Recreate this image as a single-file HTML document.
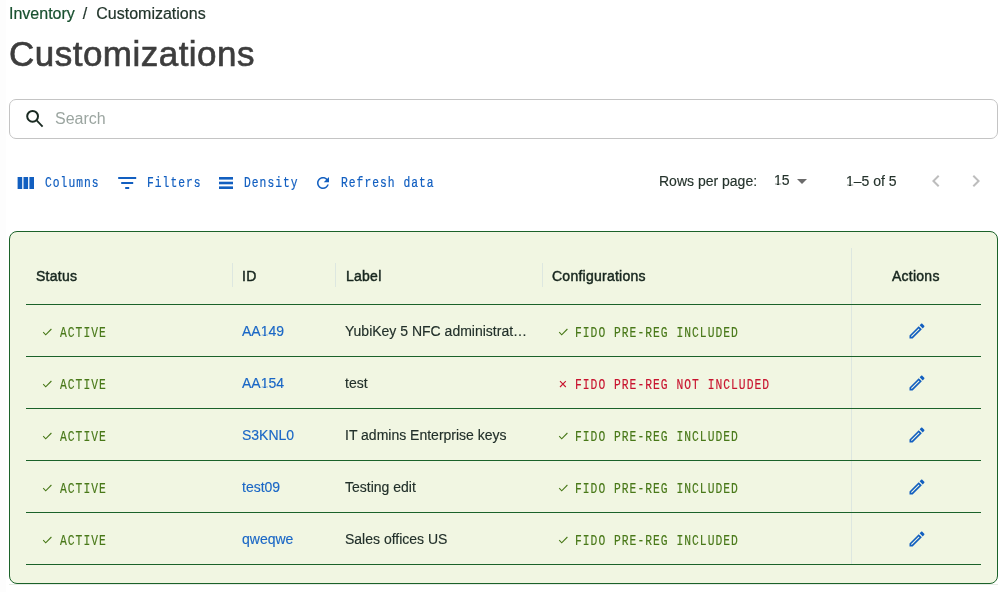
<!DOCTYPE html>
<html>
<head>
<meta charset="utf-8">
<style>
html,body{margin:0;padding:0;}
body{will-change:transform;width:1006px;height:592px;overflow:hidden;background:#fff;position:relative;font-family:"Liberation Sans",sans-serif;}
.abs{position:absolute;white-space:nowrap;}
.strip{left:0;top:0;width:6px;height:592px;background:#fdfdfd;}
.crumb{left:9px;top:2px;font-size:16px;line-height:24px;color:#22352b;-webkit-text-stroke:0.2px #22352b;}
.crumb .inv{color:#18502f;-webkit-text-stroke:0.2px #18502f;}
.crumb .sep{margin:0 9px 0 8px;}
.title{left:9px;top:33px;font-size:35px;line-height:42px;color:#3d3d3d;letter-spacing:0.48px;-webkit-text-stroke:0.65px #3d3d3d;}
.search{left:9px;top:99px;width:987px;height:38px;border:1px solid #c4c4c4;border-radius:7px;}
.ph{left:55px;top:107px;font-size:16px;line-height:24px;color:#9ba5a0;}
.tb{font-family:"Liberation Mono",monospace;font-size:13px;line-height:20px;color:#125fc0;top:174px;transform:scale(0.87,1.12);transform-origin:0 13.5px;letter-spacing:1.166px;-webkit-text-stroke:0.2px #125fc0;}
.pg{font-size:14px;line-height:20px;color:#25332c;top:171px;-webkit-text-stroke:0.15px #25332c;}
.grid{left:9px;top:231px;width:987px;height:351px;border:1px solid #1b6229;border-radius:8px;background:#f1f6e2;}
.hd{font-size:14px;line-height:20px;font-weight:normal;color:#17261e;top:266px;letter-spacing:0.25px;-webkit-text-stroke:0.45px #17261e;}
.vsep{width:1px;background:#dde7e0;}
.hline{left:26px;width:955px;height:1px;background:#1b6229;}
.cell{font-size:14px;line-height:20px;color:#22302a;-webkit-text-stroke:0.15px #22302a;}
.cell.link{color:#1a67c6;-webkit-text-stroke:0.15px #1a67c6;}
.mono{font-family:"Liberation Mono",monospace;font-size:13px;line-height:20px;transform:scale(0.87,1.15);transform-origin:0 13.5px;letter-spacing:1.166px;}
.ok{-webkit-text-stroke:0.15px #487818;}
.bad{-webkit-text-stroke:0.15px #c8142f;}
.ok{color:#487818;}
.bad{color:#c8142f;}
.link{color:#1f6cc4;}
.one{display:inline-block;line-height:1.117em;clip-path:polygon(0 0,100% 0,100% 0.8em,0.37em 0.8em,0.37em 100%,0.2em 100%,0.2em 0.8em,0 0.8em);}
</style>
</head>
<body>
<div class="abs strip"></div>

<div class="abs crumb"><span class="inv">Inventory</span><span class="sep">/</span>Customizations</div>
<div class="abs title">Customizations</div>

<div class="abs search"></div>
<svg class="abs" style="left:23px;top:107px" width="24" height="24" viewBox="0 0 24 24">
  <circle cx="9.6" cy="9.3" r="5.4" fill="none" stroke="#1a2a22" stroke-width="2"/>
  <line x1="13.4" y1="13.2" x2="19.6" y2="19.6" stroke="#1a2a22" stroke-width="1.8"/>
</svg>
<div class="abs ph">Search</div>

<!-- toolbar -->
<svg class="abs" style="left:15px;top:173px" width="20" height="20" viewBox="0 0 20 20">
  <rect x="2.6" y="4" width="4.6" height="12" fill="#125fc0"/>
  <rect x="8.5" y="4" width="4.6" height="12" fill="#125fc0"/>
  <rect x="14.4" y="4" width="4.6" height="12" fill="#125fc0"/>
</svg>
<div class="abs tb" style="left:44.5px">Columns</div>

<svg class="abs" style="left:117px;top:173px" width="20" height="20" viewBox="0 0 20 20">
  <rect x="1.2" y="4" width="18" height="2" fill="#125fc0"/>
  <rect x="4.2" y="9" width="12" height="2" fill="#125fc0"/>
  <rect x="8.2" y="14" width="4" height="2" fill="#125fc0"/>
</svg>
<div class="abs tb" style="left:146.5px">Filters</div>

<svg class="abs" style="left:216px;top:173px" width="20" height="20" viewBox="0 0 20 20">
  <rect x="3" y="4" width="14" height="2.6" fill="#125fc0"/>
  <rect x="3" y="8.7" width="14" height="2.6" fill="#125fc0"/>
  <rect x="3" y="13.4" width="14" height="2.6" fill="#125fc0"/>
</svg>
<div class="abs tb" style="left:243.5px">Density</div>

<svg class="abs" style="left:314px;top:174px" width="18" height="18" viewBox="0 0 24 24">
  <path fill="#125fc0" d="M17.65 6.35C16.2 4.9 14.21 4 12 4c-4.42 0-7.99 3.58-7.99 8s3.57 8 7.99 8c3.73 0 6.84-2.55 7.73-6h-2.08c-.82 2.33-3.04 4-5.65 4-3.31 0-6-2.69-6-6s2.69-6 6-6c1.66 0 3.14.69 4.22 1.78L13 11h7V4l-2.35 2.35z"/>
</svg>
<div class="abs tb" style="left:340.5px">Refresh data</div>

<!-- pagination -->
<div class="abs pg" style="left:659px">Rows per page:</div>
<div class="abs pg" style="left:774px;top:170px"><span class="one">1</span>5</div>
<svg class="abs" style="left:790px;top:169px" width="24" height="24" viewBox="0 0 24 24"><path d="M7 10l5 5 5-5z" fill="#6b6b6b"/></svg>
<div class="abs pg" style="left:846px"><span class="one">1</span>–5 of 5</div>
<svg class="abs" style="left:924px;top:169px" width="24" height="24" viewBox="0 0 24 24"><path d="M15.41 7.41 14 6l-6 6 6 6 1.41-1.41L10.83 12z" fill="#bdbdbd"/></svg>
<svg class="abs" style="left:964px;top:169px" width="24" height="24" viewBox="0 0 24 24"><path d="M10 6 8.59 7.41 13.17 12l-4.58 4.59L10 18l6-6z" fill="#bdbdbd"/></svg>

<!-- grid -->
<div class="abs" style="left:9px;top:584px;width:989px;height:1px;background:#e6ece6"></div>
<div class="abs grid"></div>
<div class="abs hd" style="left:36px">Status</div>
<div class="abs vsep" style="left:232px;top:263px;height:24px"></div>
<div class="abs hd" style="left:242px">ID</div>
<div class="abs vsep" style="left:335px;top:263px;height:24px"></div>
<div class="abs hd" style="left:346px">Label</div>
<div class="abs vsep" style="left:542px;top:263px;height:24px"></div>
<div class="abs hd" style="left:552px">Configurations</div>
<div class="abs vsep" style="left:851px;top:248px;height:317px"></div>
<div class="abs hd" style="left:892px">Actions</div>

<div class="abs hline" style="top:304px"></div>
<div class="abs hline" style="top:356px"></div>
<div class="abs hline" style="top:408px"></div>
<div class="abs hline" style="top:460px"></div>
<div class="abs hline" style="top:512px"></div>
<div class="abs hline" style="top:564px"></div>

<svg class="abs" style="left:42px;top:328px" width="11" height="9" viewBox="0 0 11 9"><path d="M1.2 4.2 3.7 6.8 9.4 1.0" fill="none" stroke="#487818" stroke-width="1.1"/></svg>
<div class="abs mono ok" style="left:59.5px;top:324px">ACTIVE</div>
<div class="abs cell link" style="left:242px;top:321px">AA<span class="one">1</span>49</div>
<div class="abs cell" style="left:345px;top:321px">YubiKey 5 NFC administrat…</div>
<svg class="abs" style="left:558px;top:328px" width="11" height="9" viewBox="0 0 11 9"><path d="M1.2 4.2 3.7 6.8 9.4 1.0" fill="none" stroke="#487818" stroke-width="1.1"/></svg>
<div class="abs mono ok" style="left:574.5px;top:324px">FIDO PRE-REG INCLUDED</div>
<svg class="abs" style="left:907px;top:321px" width="20" height="20" viewBox="0 0 24 24"><path fill="#125fc0" d="M3 17.25V21h3.75L17.81 9.94l-3.75-3.75L3 17.25zM5.92 19H5v-.92l9.06-9.06.92.92L5.92 19zM20.71 5.63l-2.34-2.34c-.39-.39-1.02-.39-1.41 0l-1.83 1.83 3.75 3.75 1.83-1.83c.39-.39.39-1.02 0-1.41z"/></svg>
<svg class="abs" style="left:42px;top:380px" width="11" height="9" viewBox="0 0 11 9"><path d="M1.2 4.2 3.7 6.8 9.4 1.0" fill="none" stroke="#487818" stroke-width="1.1"/></svg>
<div class="abs mono ok" style="left:59.5px;top:376px">ACTIVE</div>
<div class="abs cell link" style="left:242px;top:373px">AA<span class="one">1</span>54</div>
<div class="abs cell" style="left:345px;top:373px">test</div>
<svg class="abs" style="left:558px;top:380px" width="11" height="9" viewBox="0 0 11 9"><path d="M2 1.2 7.8 7M7.8 1.2 2 7" fill="none" stroke="#c8142f" stroke-width="1.1"/></svg>
<div class="abs mono bad" style="left:574.5px;top:376px">FIDO PRE-REG NOT INCLUDED</div>
<svg class="abs" style="left:907px;top:373px" width="20" height="20" viewBox="0 0 24 24"><path fill="#125fc0" d="M3 17.25V21h3.75L17.81 9.94l-3.75-3.75L3 17.25zM5.92 19H5v-.92l9.06-9.06.92.92L5.92 19zM20.71 5.63l-2.34-2.34c-.39-.39-1.02-.39-1.41 0l-1.83 1.83 3.75 3.75 1.83-1.83c.39-.39.39-1.02 0-1.41z"/></svg>
<svg class="abs" style="left:42px;top:432px" width="11" height="9" viewBox="0 0 11 9"><path d="M1.2 4.2 3.7 6.8 9.4 1.0" fill="none" stroke="#487818" stroke-width="1.1"/></svg>
<div class="abs mono ok" style="left:59.5px;top:428px">ACTIVE</div>
<div class="abs cell link" style="left:242px;top:425px">S3KNL0</div>
<div class="abs cell" style="left:345px;top:425px">IT admins Enterprise keys</div>
<svg class="abs" style="left:558px;top:432px" width="11" height="9" viewBox="0 0 11 9"><path d="M1.2 4.2 3.7 6.8 9.4 1.0" fill="none" stroke="#487818" stroke-width="1.1"/></svg>
<div class="abs mono ok" style="left:574.5px;top:428px">FIDO PRE-REG INCLUDED</div>
<svg class="abs" style="left:907px;top:425px" width="20" height="20" viewBox="0 0 24 24"><path fill="#125fc0" d="M3 17.25V21h3.75L17.81 9.94l-3.75-3.75L3 17.25zM5.92 19H5v-.92l9.06-9.06.92.92L5.92 19zM20.71 5.63l-2.34-2.34c-.39-.39-1.02-.39-1.41 0l-1.83 1.83 3.75 3.75 1.83-1.83c.39-.39.39-1.02 0-1.41z"/></svg>
<svg class="abs" style="left:42px;top:484px" width="11" height="9" viewBox="0 0 11 9"><path d="M1.2 4.2 3.7 6.8 9.4 1.0" fill="none" stroke="#487818" stroke-width="1.1"/></svg>
<div class="abs mono ok" style="left:59.5px;top:480px">ACTIVE</div>
<div class="abs cell link" style="left:242px;top:477px">test09</div>
<div class="abs cell" style="left:345px;top:477px">Testing edit</div>
<svg class="abs" style="left:558px;top:484px" width="11" height="9" viewBox="0 0 11 9"><path d="M1.2 4.2 3.7 6.8 9.4 1.0" fill="none" stroke="#487818" stroke-width="1.1"/></svg>
<div class="abs mono ok" style="left:574.5px;top:480px">FIDO PRE-REG INCLUDED</div>
<svg class="abs" style="left:907px;top:477px" width="20" height="20" viewBox="0 0 24 24"><path fill="#125fc0" d="M3 17.25V21h3.75L17.81 9.94l-3.75-3.75L3 17.25zM5.92 19H5v-.92l9.06-9.06.92.92L5.92 19zM20.71 5.63l-2.34-2.34c-.39-.39-1.02-.39-1.41 0l-1.83 1.83 3.75 3.75 1.83-1.83c.39-.39.39-1.02 0-1.41z"/></svg>
<svg class="abs" style="left:42px;top:536px" width="11" height="9" viewBox="0 0 11 9"><path d="M1.2 4.2 3.7 6.8 9.4 1.0" fill="none" stroke="#487818" stroke-width="1.1"/></svg>
<div class="abs mono ok" style="left:59.5px;top:532px">ACTIVE</div>
<div class="abs cell link" style="left:242px;top:529px">qweqwe</div>
<div class="abs cell" style="left:345px;top:529px">Sales offices US</div>
<svg class="abs" style="left:558px;top:536px" width="11" height="9" viewBox="0 0 11 9"><path d="M1.2 4.2 3.7 6.8 9.4 1.0" fill="none" stroke="#487818" stroke-width="1.1"/></svg>
<div class="abs mono ok" style="left:574.5px;top:532px">FIDO PRE-REG INCLUDED</div>
<svg class="abs" style="left:907px;top:529px" width="20" height="20" viewBox="0 0 24 24"><path fill="#125fc0" d="M3 17.25V21h3.75L17.81 9.94l-3.75-3.75L3 17.25zM5.92 19H5v-.92l9.06-9.06.92.92L5.92 19zM20.71 5.63l-2.34-2.34c-.39-.39-1.02-.39-1.41 0l-1.83 1.83 3.75 3.75 1.83-1.83c.39-.39.39-1.02 0-1.41z"/></svg>

</body>
</html>
